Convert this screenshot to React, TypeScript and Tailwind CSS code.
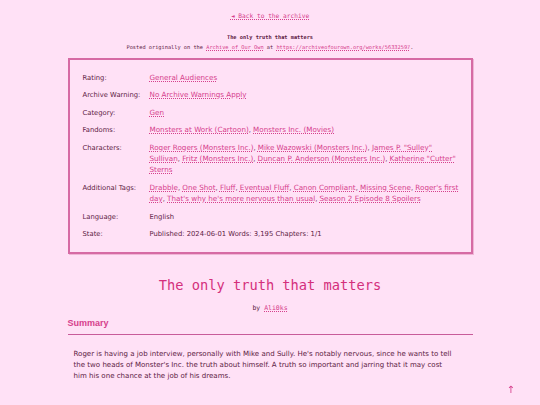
import React from "react";

function L({ children }: { children: React.ReactNode }) {
  return (
    <a href="#" className="text-[#d6408c] underline decoration-dotted underline-offset-1">
      {children}
    </a>
  );
}

function ML({ children }: { children: React.ReactNode }) {
  return (
    <a
      href="#"
      className="text-[7.2px] leading-[8px] text-[#d6408c] underline decoration-dotted underline-offset-1"
    >
      {children}
    </a>
  );
}

function Row({ label, children }: { label: string; children: React.ReactNode }) {
  return (
    <div className="flex">
      <div className="w-[67px] shrink-0">{label}</div>
      <div className="w-[314px]">{children}</div>
    </div>
  );
}

export default function App() {
  return (
    <div className="relative min-h-screen bg-[#ffe1f6] text-[#5e1c44]">
      <div className="mx-auto flex w-[405px] flex-col pt-[11px]">
        <div className="text-center font-['DejaVu_Sans_Mono',monospace] text-[6.2px] leading-[10px]">
          <L>◄ Back to the archive</L>
        </div>
        <div className="mt-[11px] text-center font-['DejaVu_Sans_Mono',monospace] text-[5.3px] font-bold leading-[10px]">
          The only truth that matters
        </div>
        <div className="text-center font-['DejaVu_Sans_Mono',monospace] text-[5.3px] leading-[10px]">
          Posted originally on the <L>Archive of Our Own</L> at{" "}
          <L>https://archiveofourown.org/works/56332597</L>.
        </div>
        <div className="mt-[6px] flex flex-col gap-[6px] border-2 border-[#d66aa4] pb-[12px] pl-[13px] pt-[13px] font-['DejaVu_Sans',sans-serif] text-[6.8px] leading-[11.4px] shadow-[1px_1px_0_#f0b5d6]">
          <Row label="Rating:">
            <ML>General Audiences</ML>
          </Row>
          <Row label="Archive Warning:">
            <ML>No Archive Warnings Apply</ML>
          </Row>
          <Row label="Category:">
            <ML>Gen</ML>
          </Row>
          <Row label="Fandoms:">
            <ML>Monsters at Work (Cartoon)</ML>, <ML>Monsters Inc. (Movies)</ML>
          </Row>
          <Row label="Characters:">
            <ML>Roger Rogers (Monsters Inc.)</ML>, <ML>Mike Wazowski (Monsters Inc.)</ML>,{" "}
            <ML>James P. "Sulley" Sullivan</ML>, <ML>Fritz (Monsters Inc.)</ML>,{" "}
            <ML>Duncan P. Anderson (Monsters Inc.)</ML>, <ML>Katherine "Cutter" Sterns</ML>
          </Row>
          <Row label="Additional Tags:">
            <ML>Drabble</ML>, <ML>One Shot</ML>, <ML>Fluff</ML>, <ML>Eventual Fluff</ML>,{" "}
            <ML>Canon Compliant</ML>, <ML>Missing Scene</ML>, <ML>Roger's first day</ML>,{" "}
            <ML>That's why he's more nervous than usual</ML>, <ML>Season 2 Episode 8 Spoilers</ML>
          </Row>
          <Row label="Language:">English</Row>
          <Row label="State:">Published: 2024-06-01 Words: 3,195 Chapters: 1/1</Row>
        </div>
        <h1 className="mt-[21px] text-center font-['DejaVu_Sans_Mono',monospace] text-[13.7px] leading-[20px] text-[#d42f7c]">
          The only truth that matters
        </h1>
        <div className="mt-[8px] text-center font-['DejaVu_Sans_Mono',monospace] text-[6.5px] leading-[10px]">
          by <L>Ali0ks</L>
        </div>
        <h2 className="mt-[4px] font-['Liberation_Sans',sans-serif] text-[9px] font-bold leading-[12px] text-[#d6408c]">
          Summary
        </h2>
        <div className="mt-[5px] h-px bg-[#c85b9a]" />
        <div className="mt-[13px] pl-[6px] pr-[18px] font-['DejaVu_Sans',sans-serif] text-[7.05px] leading-[11px]">
          Roger is having a job interview, personally with Mike and Sully. He's notably nervous,
          since he wants to tell the two heads of Monster's Inc. the truth about himself. A truth
          so important and jarring that it may cost him his one chance at the job of his dreams.
        </div>
        <h2 className="mt-[21px] font-['Liberation_Sans',sans-serif] text-[9px] font-bold leading-[12px] text-[#d6408c]">
          Notes
        </h2>
      </div>
      <a
        href="#"
        className="fixed right-[25px] top-[384px] font-['DejaVu_Sans',sans-serif] text-[10px] leading-[12px] text-[#d6408c]"
      >
        ↑
      </a>
    </div>
  );
}
